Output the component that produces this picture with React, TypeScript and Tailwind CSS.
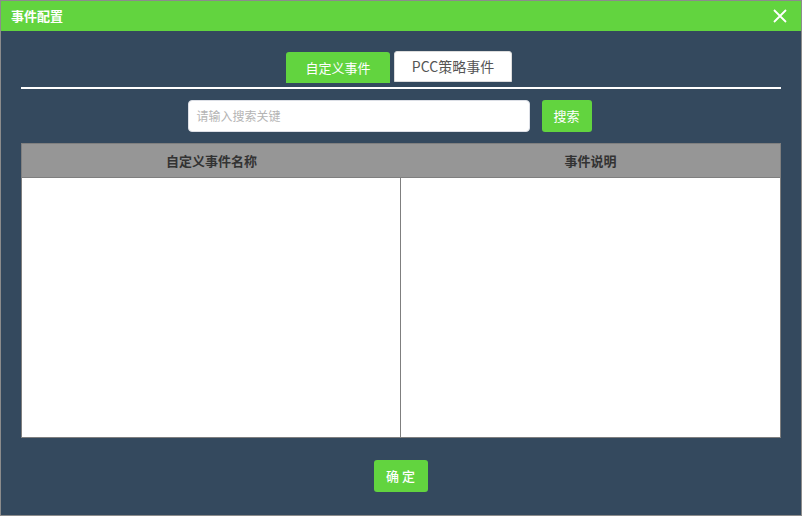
import { FC } from 'react'

const font = { fontFamily: '"Noto Sans CJK SC", "Liberation Sans", sans-serif' }

const App: FC = () => {
  return (
    <div className="w-[802px] h-[516px] border border-[#8c8c8c] bg-[#34495e] flex flex-col" style={font}>
      {/* Title bar */}
      <div className="h-[30px] bg-[#62d43f] flex items-center justify-between pl-[10px] pr-[14px] shrink-0">
        <span className="text-white text-[13px] font-bold">事件配置</span>
        <svg width="14" height="14" viewBox="0 0 14 14" className="text-white">
          <path d="M1 1 L13 13 M13 1 L1 13" stroke="currentColor" strokeWidth="1.8" />
        </svg>
      </div>

      <div className="flex flex-col px-[20px]">
        {/* Tabs */}
        <div className="flex justify-center items-end gap-[4px] mt-[20px] pr-[4px]">
          <div className="w-[104px] h-[31px] bg-[#62d43f] rounded-t-[3px] text-white text-[13px] flex items-center justify-center">
            自定义事件
          </div>
          <div className="w-[118px] h-[31px] bg-white border border-[#dcdcdc] rounded-t-[3px] text-[#555] text-[14px] flex items-center justify-center mb-[1px]">
            PCC策略事件
          </div>
        </div>
        <div className="h-[2px] bg-white mt-[4px]"></div>

        {/* Search */}
        <div className="flex justify-center items-center gap-[12px] mt-[11px] pr-[23px]">
          <div className="w-[342px] h-[32px] bg-white rounded-[4px] border border-[#dcdfe6] flex items-center px-[8px]">
            <span className="text-[#b4b4b4] text-[12px]">请输入搜索关键</span>
          </div>
          <div className="w-[50px] h-[32px] bg-[#62d43f] rounded-[3px] text-white text-[13px] flex items-center justify-center">
            搜索
          </div>
        </div>

        {/* Table */}
        <div className="mt-[11px] border border-[#7f7f7f] bg-white">
          <div className="grid grid-cols-[379px_1fr] h-[34px] bg-[#969696] border-b border-[#7f7f7f]">
            <div className="flex items-center justify-center text-[#333] text-[13px] font-bold">自定义事件名称</div>
            <div className="flex items-center justify-center text-[#333] text-[13px] font-bold">事件说明</div>
          </div>
          <div className="grid grid-cols-[379px_1fr] h-[259px]">
            <div className="border-r border-[#7f7f7f]"></div>
            <div></div>
          </div>
        </div>

        {/* Confirm */}
        <div className="flex justify-center mt-[22px] pr-[1px]">
          <div className="w-[54px] h-[32px] bg-[#62d43f] rounded-[3px] text-white text-[13px] font-medium flex items-center justify-center">
            确 定
          </div>
        </div>
      </div>
    </div>
  )
}

export default App
